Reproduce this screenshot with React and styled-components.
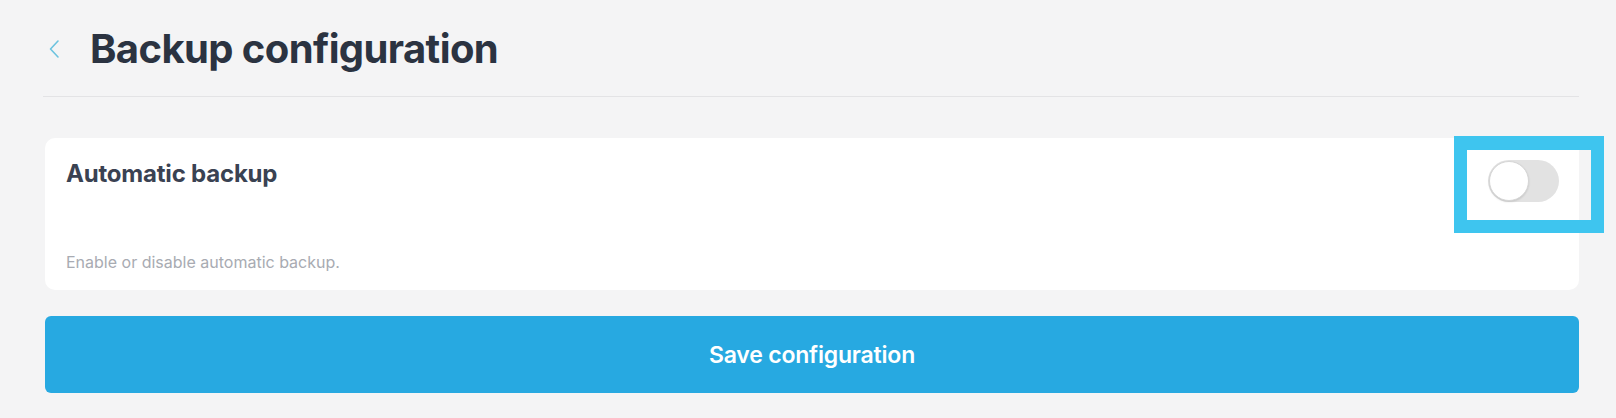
import React, { useState } from 'react';
import styled, { createGlobalStyle } from 'styled-components';

const GlobalStyle = createGlobalStyle`
  html, body {
    margin: 0;
    padding: 0;
    background: #f4f4f5;
    font-family: 'Inter', 'Noto Sans', sans-serif;
  }
`;

const Page = styled.div`
  padding: 0 37px 25px 45px;
  background: #f4f4f5;
`;

const Header = styled.div`
  display: flex;
  align-items: center;
  height: 96px;
  margin-left: -2px;
  border-bottom: 1px solid #e3e3e5;
`;

const BackButton = styled.button`
  display: flex;
  align-items: center;
  justify-content: center;
  width: 14px;
  height: 20px;
  margin: 2px 29px 0 4px;
  padding: 0;
  border: none;
  background: none;
  color: #6cc3df;
  cursor: pointer;
`;

const Title = styled.h1`
  margin: 0;
  font-size: 40px;
  font-weight: 700;
  letter-spacing: -0.6px;
  color: #2b3341;
`;

const Card = styled.div`
  position: relative;
  display: flex;
  justify-content: space-between;
  margin-top: 41px;
  height: 152px;
  box-sizing: border-box;
  padding: 22px 20px 18px 21px;
  background: #ffffff;
  border-radius: 10px;
`;

const CardText = styled.div`
  display: flex;
  flex-direction: column;
  justify-content: space-between;
`;

const CardTitle = styled.div`
  font-size: 24px;
  line-height: 28px;
  font-weight: 700;
  letter-spacing: -0.2px;
  color: #3a4252;
`;

const CardDescription = styled.div`
  font-size: 16px;
  line-height: 20px;
  color: #a8abb2;
`;

const ToggleTrack = styled.button`
  position: relative;
  width: 71px;
  height: 42px;
  margin-top: 0;
  padding: 0;
  border: none;
  border-radius: 21px;
  background: ${p => (p.$on ? '#27a9e1' : '#e2e2e2')};
  cursor: pointer;
  transition: background 0.2s;
`;

const ToggleKnob = styled.span`
  position: absolute;
  top: 1px;
  left: ${p => (p.$on ? '30px' : '1px')};
  width: 38px;
  height: 38px;
  border-radius: 50%;
  background: #ffffff;
  border: 1px solid #d6d6d6;
  box-shadow: 0 1px 2px rgba(0, 0, 0, 0.12);
  transition: left 0.2s;
`;

const Highlight = styled.div`
  position: absolute;
  top: -2px;
  right: -25px;
  width: 150px;
  height: 97px;
  box-sizing: border-box;
  border: 13px solid #3ec5ef;
  border-top-width: 14px;
  pointer-events: none;
`;

const SaveButton = styled.button`
  display: block;
  width: 100%;
  height: 77px;
  margin-top: 26px;
  border: none;
  border-radius: 6px;
  background: #27a9e1;
  color: #ffffff;
  font-family: 'Inter', 'Noto Sans', sans-serif;
  font-size: 23px;
  font-weight: 600;
  letter-spacing: -0.2px;
  cursor: pointer;
`;

const ChevronLeft = () => (
  <svg width="14" height="20" viewBox="0 0 14 20" fill="none">
    <path d="M11 2L3.5 10l7.5 8" stroke="currentColor" strokeWidth="1.6" strokeLinecap="round" strokeLinejoin="round" />
  </svg>
);

const App = () => {
  const [enabled, setEnabled] = useState(false);
  return (
    <>
      <GlobalStyle />
      <Page>
        <Header>
          <BackButton aria-label="Back">
            <ChevronLeft />
          </BackButton>
          <Title>Backup configuration</Title>
        </Header>
        <Card>
          <CardText>
            <CardTitle>Automatic backup</CardTitle>
            <CardDescription>Enable or disable automatic backup.</CardDescription>
          </CardText>
          <ToggleTrack $on={enabled} onClick={() => setEnabled(!enabled)} aria-label="Automatic backup">
            <ToggleKnob $on={enabled} />
          </ToggleTrack>
          <Highlight />
        </Card>
        <SaveButton>Save configuration</SaveButton>
      </Page>
    </>
  );
};

export default App;
